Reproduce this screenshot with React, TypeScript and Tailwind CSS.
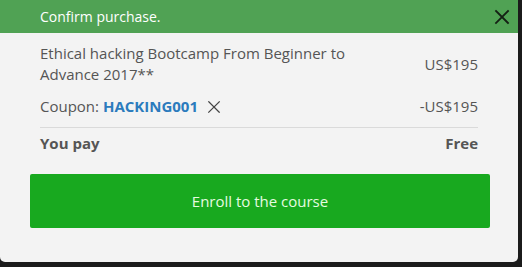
import React from 'react';

const font = { fontFamily: '"Open Sans", "Noto Sans", sans-serif' };

const Cross = ({ className, strokeWidth }: { className: string; strokeWidth: number }) => (
  <svg viewBox="0 0 16 16" className={className} fill="none" stroke="currentColor" strokeWidth={strokeWidth} strokeLinecap="square">
    <path d="M2 2 L14 14 M14 2 L2 14" />
  </svg>
);

export default function App() {
  return (
    <div className="w-[522px] h-[267px] bg-[#1b1b1b] overflow-hidden" style={font}>
      <div className="w-[518px] h-[262px] bg-[#f3f3f3] rounded-b-[5px] flex flex-col">
        <div className="h-[33px] bg-[#50a254] flex items-center justify-between pl-10 pr-[8px]">
          <span className="text-[14px] text-white">Confirm purchase.</span>
          <Cross className="w-[16px] h-[16px] text-[#142014]" strokeWidth={1.8} />
        </div>

        <div className="mx-10 pt-[10px] text-[15px] leading-[21px] text-[#555]">
          <div className="flex items-center justify-between">
            <span className="w-[330px]">Ethical hacking Bootcamp From Beginner to Advance 2017**</span>
            <span>US$195</span>
          </div>
          <div className="flex items-center justify-between mt-[11px] pb-[10px] border-b border-[#dadada]">
            <span className="flex items-center">
              Coupon:&nbsp;<span className="font-bold text-[#2b7bbd]">HACKING001</span>
              <Cross className="w-[14px] h-[14px] ml-[9px] text-[#444]" strokeWidth={1.4} />
            </span>
            <span>-US$195</span>
          </div>
          <div className="flex items-center justify-between pt-[5px] font-bold">
            <span>You pay</span>
            <span>Free</span>
          </div>
        </div>

        <button className="mt-[20px] ml-[30px] w-[460px] h-[54px] bg-[#18a91f] rounded-[2px] text-[15px] text-[#e6fbe0]">
          Enroll to the course
        </button>
      </div>
    </div>
  );
}
